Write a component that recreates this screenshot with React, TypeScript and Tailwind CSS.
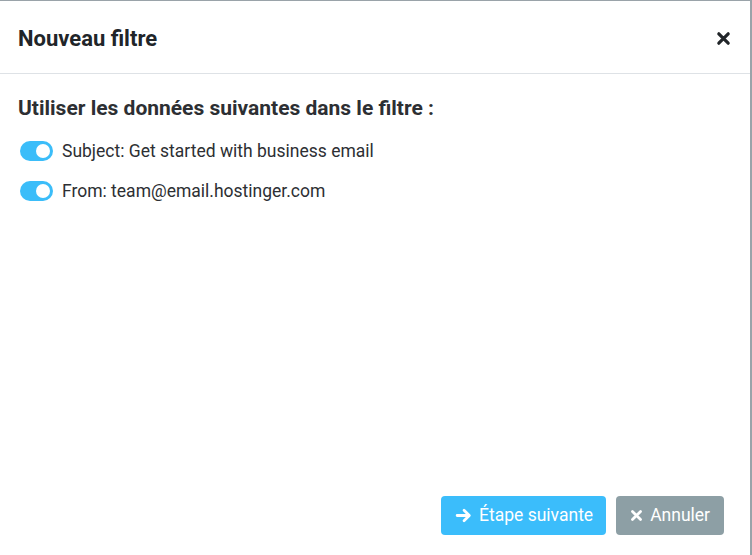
import React from "react";

function Toggle() {
  return (
    <span className="relative inline-flex h-[20px] w-[33px] shrink-0 items-center rounded-full bg-[#3bbdf9]">
      <span className="absolute right-[3px] h-[14px] w-[14px] rounded-full bg-white" />
    </span>
  );
}

function Times({ className }: { className?: string }) {
  return (
    <svg viewBox="0 0 16 16" className={className} fill="none">
      <path d="M3 3 L13 13 M13 3 L3 13" stroke="currentColor" strokeWidth="3.4" strokeLinecap="round" />
    </svg>
  );
}

function ArrowRight({ className }: { className?: string }) {
  return (
    <svg viewBox="0 0 16 16" className={className} fill="none">
      <path d="M2 8 H13 M8.5 3 L13.5 8 L8.5 13" stroke="currentColor" strokeWidth="2.6" strokeLinecap="round" strokeLinejoin="round" />
    </svg>
  );
}

export default function App() {
  return (
    <div
      className="h-[555px] w-[752px] overflow-hidden bg-[#9aa3a9] pt-px pr-[2px]"
      style={{ fontFamily: "Roboto, 'Liberation Sans', sans-serif" }}
    >
      <div className="flex h-[554px] w-[750px] flex-col bg-white text-[#2d2f33]">
        <div className="flex h-[73px] items-center justify-between border-b border-[#dee2e6] pl-[18px] pr-[19px] pt-[3px]">
          <h5 className="text-[22px] font-bold text-[#212529]">Nouveau filtre</h5>
          <button type="button" className="text-[#212529]">
            <Times className="h-[15px] w-[15px]" />
          </button>
        </div>

        <div className="flex-1 px-[18px] pt-[19px]">
          <h6 className="mb-[13px] text-[21px] font-bold text-[#2d2f33]">
            Utiliser les données suivantes dans le filtre :
          </h6>
          <label className="mb-[14px] flex items-center gap-[9px] pl-[2px] text-[17.5px]">
            <Toggle />
            <span>Subject: Get started with business email</span>
          </label>
          <label className="flex items-center gap-[9px] pl-[2px] text-[17.5px]">
            <Toggle />
            <span>From: team@email.hostinger.com</span>
          </label>
        </div>

        <div className="flex justify-end gap-[10px] pb-[20px] pr-[26px]">
          <button
            type="button"
            className="flex h-[39px] items-center gap-[7px] rounded-[4px] bg-[#3bbdfb] pl-[14px] pr-[13px] text-[17.5px] text-white"
          >
            <ArrowRight className="h-[17px] w-[17px]" />
            Étape suivante
          </button>
          <button
            type="button"
            className="flex h-[39px] items-center gap-[7px] rounded-[4px] bg-[#8d9fa5] px-[14px] text-[17.5px] text-white"
          >
            <Times className="h-[13px] w-[13px]" />
            Annuler
          </button>
        </div>
      </div>
    </div>
  );
}
